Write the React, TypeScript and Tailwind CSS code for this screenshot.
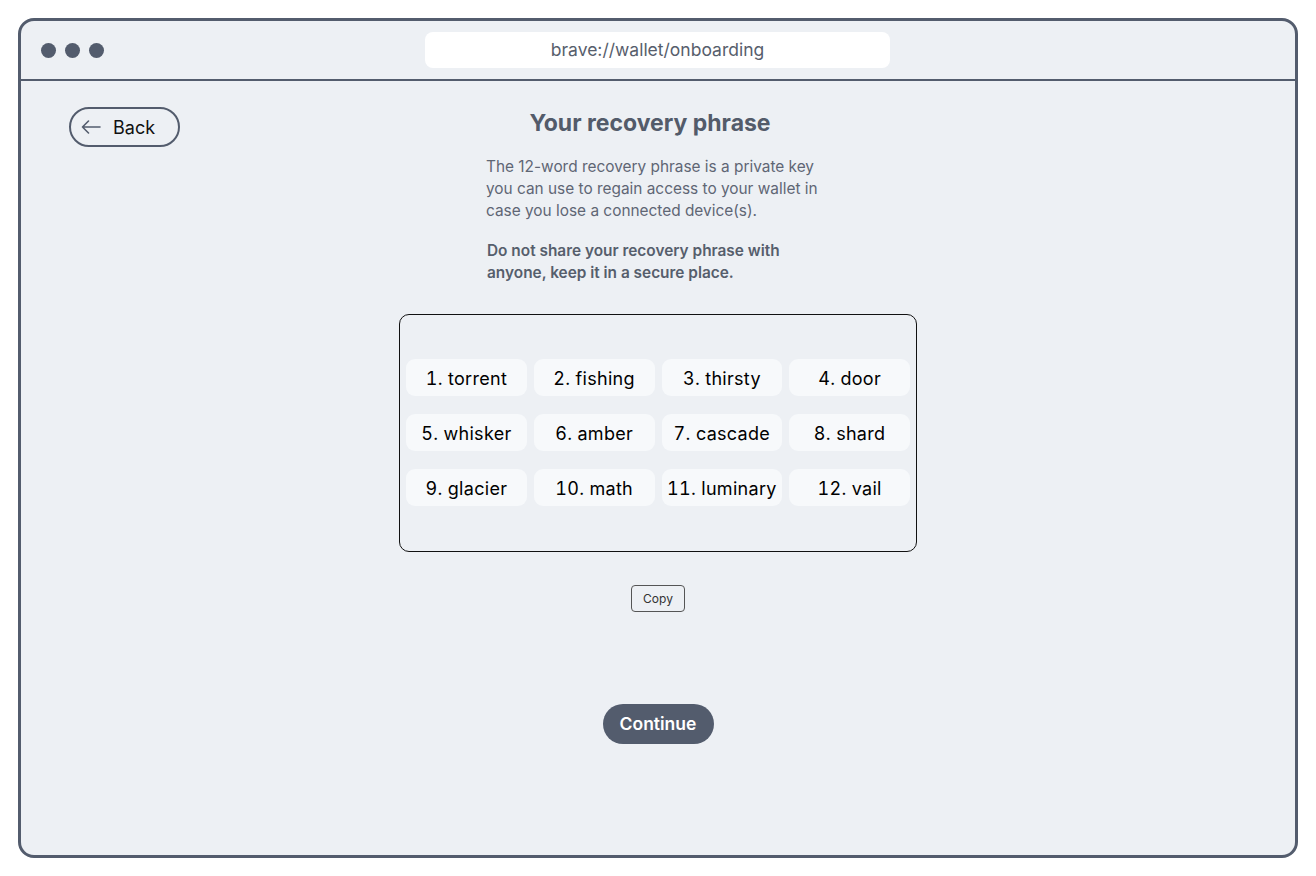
const words = [
  "torrent",
  "fishing",
  "thirsty",
  "door",
  "whisker",
  "amber",
  "cascade",
  "shard",
  "glacier",
  "math",
  "luminary",
  "vail",
];

function BackArrow() {
  return (
    <svg width="20" height="14" viewBox="0 0 20 14" fill="none">
      <path
        d="M19 7H1.5M7.5 1L1.5 7l6 6"
        stroke="#535c6d"
        strokeWidth="1.6"
        strokeLinecap="round"
        strokeLinejoin="round"
      />
    </svg>
  );
}

function BrowserBar() {
  return (
    <div className="flex h-[60px] items-center border-b-2 border-[#535c6d] pl-[20px]">
      <div className="flex gap-[9px]">
        <span className="h-[15px] w-[15px] rounded-full bg-[#535c6d]" />
        <span className="h-[15px] w-[15px] rounded-full bg-[#535c6d]" />
        <span className="h-[15px] w-[15px] rounded-full bg-[#535c6d]" />
      </div>
      <div className="ml-[321px] flex h-[36px] w-[465px] items-center justify-center rounded-[8px] bg-white text-[17.5px] text-[#575e6c]">
        brave://wallet/onboarding
      </div>
    </div>
  );
}

function App() {
  return (
    <div
      className="min-h-screen bg-white p-[18px]"
      style={{ fontFamily: "Inter, 'Noto Sans', sans-serif" }}
    >
      <div className="h-[840px] w-[1280px] overflow-hidden rounded-[16px] border-[3px] border-[#535c6d] bg-[#edf0f4]">
        <BrowserBar />
        <div className="grid grid-cols-[1fr_518px_1fr]">
          <div className="pl-[48px] pt-[26px]">
            <button className="flex h-[40px] w-[111px] items-center gap-[12px] rounded-full border-2 border-[#535c6d] pl-[10px] text-[18px] text-[#111]">
              <BackArrow />
              Back
            </button>
          </div>
          <div className="flex flex-col items-center pt-[26px]">
            <h1 className="pr-[16px] text-[23px] font-bold leading-[32px] text-[#535b6a]">
              Your recovery phrase
            </h1>
            <p className="mt-[17px] ml-[87px] w-[345px] self-start text-[15.4px] leading-[22px] text-[#5f6674]">
              The 12-word recovery phrase is a private key you can use to
              regain access to your wallet in case you lose a connected
              device(s).
            </p>
            <p className="mt-[18px] ml-[88px] w-[340px] self-start text-[15.4px] font-semibold leading-[22px] text-[#565e6c]">
              Do not share your recovery phrase with anyone, keep it in a
              secure place.
            </p>
            <div className="mt-[30px] h-[238px] w-[518px] rounded-[10px] border border-[#111] px-[6px] pt-[44px]">
              <div className="grid grid-cols-4 gap-x-[7px] gap-y-[18px]">
                {words.map((w, i) => (
                  <div
                    key={w}
                    className="flex h-[37px] items-center justify-center rounded-[9px] bg-[#f7f9fb] pt-px text-[18px] tracking-[0.3px] tabular-nums text-black"
                  >
                    {i + 1}. {w}
                  </div>
                ))}
              </div>
            </div>
            <button className="mt-[33px] h-[27px] w-[54px] rounded-[4px] border border-[#555] text-[12px] text-[#333]">
              Copy
            </button>
            <button className="mt-[92px] h-[40px] w-[111px] rounded-full bg-[#535c6d] pt-px text-[17.5px] font-semibold text-white">
              Continue
            </button>
          </div>
          <div />
        </div>
      </div>
    </div>
  );
}

export default App;
